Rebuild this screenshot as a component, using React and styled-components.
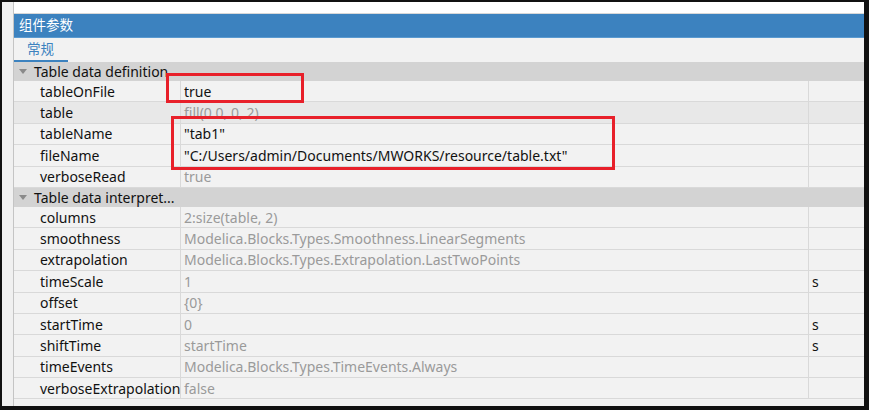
import React from 'react'
import styled, { createGlobalStyle } from 'styled-components'

const Global = createGlobalStyle`
html, body { margin: 0; padding: 0; background: #fff; }
body { font-family: 'Noto Sans', 'Noto Sans CJK SC', sans-serif; }
`

const Frame = styled.div`
position: relative;
width: 869px;
height: 410px;
box-sizing: border-box;
border-style: solid;
border-color: #111;
border-width: 2px 5px 4px 2px;
display: flex;
background: #f2f2f2;
overflow: hidden;
`
const Gutter = styled.div`
width: 11px;
flex: none;
background: #f0f0f0;
border-right: 1px solid #c4c4c4;
`
const Main = styled.div`
flex: 1;
display: flex;
flex-direction: column;
min-width: 0;
`
const TopStrip = styled.div`
height: 11px;
flex: none;
background: #fff;
border-bottom: 1px solid #d8d8d8;
`
const Header = styled.div`
height: 23px;
flex: none;
background: #3c82bf;
color: #fff;
font-size: 13.5px;
line-height: 23px;
padding-left: 5px;
border-bottom: 1px solid #5a9ad0;
`
const TabBar = styled.div`
height: 24px;
flex: none;
display: flex;
align-items: flex-end;
background: #f2f2f2;
`
const Tab = styled.div`
width: 54px;
height: 23px;
box-sizing: border-box;
padding-left: 13px;
font-size: 13.5px;
line-height: 21px;
color: #3c82bf;
border-bottom: 2px solid #3c82bf;
`
const Body = styled.div`
flex: 1;
display: flex;
flex-direction: column;
`
const Group = styled.div`
height: 19px;
flex: none;
display: flex;
align-items: center;
background: #d3d3d3;
font-size: 14px;
color: #111;
`
const Caret = styled.span`
width: 0;
height: 0;
margin: 0 7px 0 5px;
border-left: 4px solid transparent;
border-right: 4px solid transparent;
border-top: 5px solid #8a8a8a;
`
const Row = styled.div`
height: 21.4px;
flex: none;
box-sizing: border-box;
display: grid;
grid-template-columns: 167px 628px 1fr;
background: ${p => (p.$dim ? '#e8e8e8' : '#f2f2f2')};
border-bottom: 1px solid #d9d9d9;
font-size: 14px;
`
const Cell = styled.div`
display: flex;
align-items: center;
overflow: hidden;
white-space: nowrap;
border-right: 1px solid #d9d9d9;
&:last-child { border-right: none; }
`
const Name = styled(Cell)`
padding-left: 26px;
color: #111;
`
const Value = styled(Cell)`
padding-left: 3px;
color: ${p => (p.$set ? '#111' : '#9a9a9a')};
`
const Unit = styled(Cell)`
padding-left: 3px;
color: #111;
`
const Mark = styled.div`
position: absolute;
border: 3px solid #e8202a;
box-sizing: border-box;
pointer-events: none;
`

const groups = [
  {
    title: 'Table data definition',
    rows: [
      { n: 'tableOnFile', v: 'true', set: true },
      { n: 'table', v: 'fill(0.0, 0, 2)', dim: true },
      { n: 'tableName', v: '"tab1"', set: true },
      { n: 'fileName', v: '"C:/Users/admin/Documents/MWORKS/resource/table.txt"', set: true },
      { n: 'verboseRead', v: 'true' },
    ],
  },
  {
    title: 'Table data interpret...',
    rows: [
      { n: 'columns', v: '2:size(table, 2)' },
      { n: 'smoothness', v: 'Modelica.Blocks.Types.Smoothness.LinearSegments' },
      { n: 'extrapolation', v: 'Modelica.Blocks.Types.Extrapolation.LastTwoPoints' },
      { n: 'timeScale', v: '1', u: 's' },
      { n: 'offset', v: '{0}' },
      { n: 'startTime', v: '0', u: 's' },
      { n: 'shiftTime', v: 'startTime', u: 's' },
      { n: 'timeEvents', v: 'Modelica.Blocks.Types.TimeEvents.Always' },
      { n: 'verboseExtrapolation', v: 'false' },
    ],
  },
]

export default function App() {
  return (
    <Frame>
      <Global />
      <Gutter />
      <Main>
        <TopStrip />
        <Header>组件参数</Header>
        <TabBar>
          <Tab>常规</Tab>
        </TabBar>
        <Body>
          {groups.map(g => (
            <React.Fragment key={g.title}>
              <Group>
                <Caret />
                {g.title}
              </Group>
              {g.rows.map(r => (
                <Row key={r.n} $dim={r.dim}>
                  <Name>{r.n}</Name>
                  <Value $set={r.set}>{r.v}</Value>
                  <Unit>{r.u}</Unit>
                </Row>
              ))}
            </React.Fragment>
          ))}
        </Body>
      </Main>
      <Mark style={{ left: 164, top: 71, width: 138, height: 30 }} />
      <Mark style={{ left: 169, top: 114, width: 444, height: 54 }} />
    </Frame>
  )
}
